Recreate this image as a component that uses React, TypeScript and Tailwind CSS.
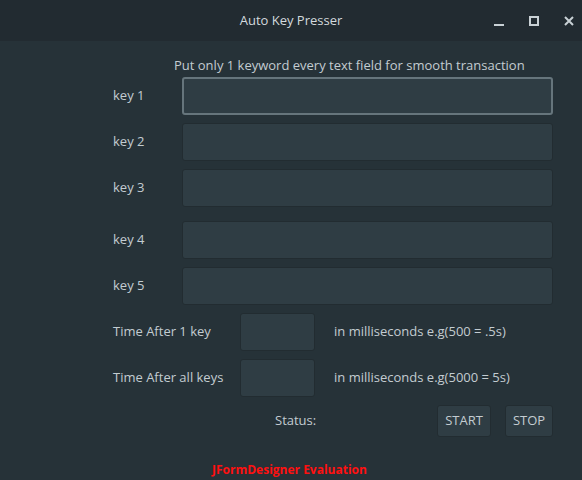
import React from 'react';

const font = { fontFamily: '"Open Sans", "DejaVu Sans", sans-serif' };

function KeyRow({ label, focused, className }: { label: string; focused?: boolean; className?: string }) {
  return (
    <div className={`flex items-center ${className ?? ''}`}>
      <span className="w-[69px] text-[13px] text-[#c3ccd1]">{label}</span>
      <div
        className={`h-[38px] flex-1 rounded-[3px] bg-[#2f3d44] ${
          focused ? 'border-2 border-[#66757c]' : 'border border-[#222c31]'
        }`}
      />
    </div>
  );
}

function TimeRow({ label, hint, className }: { label: string; hint: string; className?: string }) {
  return (
    <div className={`flex items-center ${className ?? ''}`}>
      <span className="w-[127px] text-[13px] text-[#c3ccd1]">{label}</span>
      <div className="h-[38px] w-[75px] rounded-[3px] border border-[#222c31] bg-[#2f3d44]" />
      <span className="ml-[19px] text-[13px] text-[#c3ccd1]">{hint}</span>
    </div>
  );
}

export default function App() {
  return (
    <div className="flex h-[480px] w-[582px] flex-col overflow-hidden bg-[#263238]" style={font}>
      {/* title bar */}
      <div className="grid h-[41px] shrink-0 grid-cols-[1fr_auto_1fr] items-center bg-[#222b31]">
        <div />
        <span className="text-[13px] text-[#d3dade]">Auto Key Presser</span>
        <div className="flex items-center justify-end gap-[25px] pr-[8px]">
          <svg width="10" height="10" viewBox="0 0 10 10">
            <rect x="0" y="8" width="10" height="2" fill="#c9d1d5" />
          </svg>
          <svg width="10" height="10" viewBox="0 0 10 10">
            <rect x="1" y="1" width="8" height="8" fill="none" stroke="#c9d1d5" strokeWidth="2" />
          </svg>
          <svg width="10" height="10" viewBox="0 0 10 10">
            <path d="M1 1 L9 9 M9 1 L1 9" stroke="#c9d1d5" strokeWidth="2" />
          </svg>
        </div>
      </div>

      {/* body */}
      <div className="flex flex-col pl-[113px] pr-[29px]">
        <p className="ml-[61px] mt-[15px] text-[13px] leading-[18px] text-[#c3ccd1]">
          Put only 1 keyword every text field for smooth transaction
        </p>
        <KeyRow label="key 1" focused className="mt-[3px]" />
        <KeyRow label="key 2" className="mt-[8px]" />
        <KeyRow label="key 3" className="mt-[8px]" />
        <KeyRow label="key 4" className="mt-[14px]" />
        <KeyRow label="key 5" className="mt-[8px]" />
        <TimeRow label="Time After 1 key" hint="in milliseconds e.g(500 = .5s)" className="mt-[8px]" />
        <TimeRow label="Time After all keys" hint="in milliseconds e.g(5000 = 5s)" className="mt-[8px]" />

        <div className="mt-[8px] flex items-center">
          <span className="ml-[162px] text-[13px] text-[#c3ccd1]">Status:</span>
          <button className="ml-auto h-[32px] w-[54px] rounded-[3px] border border-[#222c31] bg-[#2f3d44] text-[13px] text-[#c3ccd1]">
            START
          </button>
          <button className="ml-[14px] h-[32px] w-[48px] rounded-[3px] border border-[#222c31] bg-[#2f3d44] text-[13px] text-[#c3ccd1]">
            STOP
          </button>
        </div>

        <span className="ml-[99px] mt-[25px] text-[12px] font-bold leading-[16px] text-[#ff1010]">
          JFormDesigner Evaluation
        </span>
      </div>
    </div>
  );
}
